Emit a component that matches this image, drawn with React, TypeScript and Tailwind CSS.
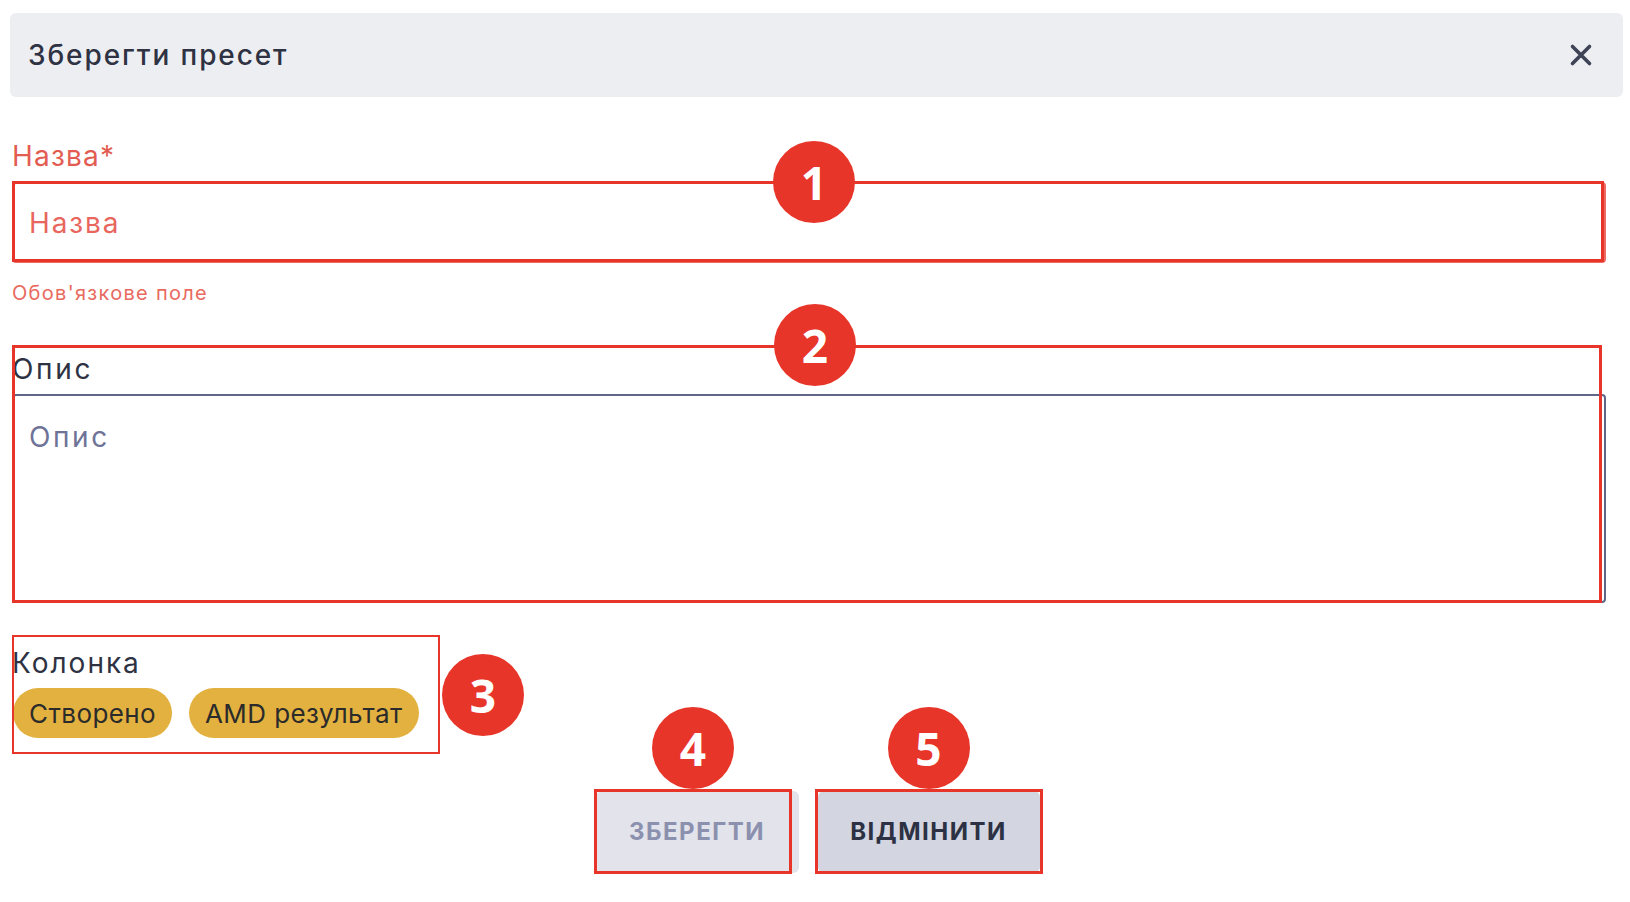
import React from "react";

const font = { fontFamily: "Inter, 'Noto Sans', sans-serif" };

// Red numbered callout disc; placement comes from the caller.
function Marker({ n, className }: { n: number; className: string }) {
  return (
    <div
      className={`pointer-events-none absolute z-10 flex h-[82px] w-[82px] items-center justify-center rounded-full bg-[#E8352A] text-[46px] font-bold leading-none text-white ${className}`}
      style={{ fontFamily: "'Open Sans', 'Noto Sans', sans-serif" }}
    >
      {n}
    </div>
  );
}

// Red outline drawn over a highlighted region.
function Frame({ className }: { className: string }) {
  return <div className={`pointer-events-none absolute border-[#E8352A] ${className}`} />;
}

export default function App() {
  return (
    <div className="h-[902px] w-[1630px] overflow-hidden bg-white pl-[10px] pr-[7px] pt-[13px]" style={font}>
      {/* dialog header */}
      <div className="flex h-[84px] items-center justify-between rounded-[6px] bg-[#EDEEF2] pl-[18px] pr-[30px]">
        <h1 className="text-[28px] font-medium tracking-[1.9px] text-[#2E3242]">Зберегти пресет</h1>
        <svg width="24" height="24" viewBox="0 0 24 24" className="text-[#3E4356]">
          <path d="M3.5 3.5 L20.5 20.5 M20.5 3.5 L3.5 20.5" stroke="currentColor" strokeWidth="3.6" strokeLinecap="round" />
        </svg>
      </div>

      <div className="ml-[2px] mr-[17px] flex flex-col">
        {/* name field */}
        <label className="mt-[43px] block text-[28px] leading-[32px] tracking-[1.2px] text-[#E35C52]">Назва*</label>
        <div className="relative mt-[10px]">
          <div className="flex h-[81px] items-center rounded-[4px] border-2 border-[#EE6A64] pl-[15px]">
            <span className="text-[28px] tracking-[1.9px] text-[#E8665D]">Назва</span>
          </div>
          <Frame className="-top-px bottom-px left-0 right-[2px] border-[3px]" />
          <Marker n={1} className="left-1/2 top-0 ml-[5px] -translate-x-1/2 -translate-y-1/2" />
        </div>
        <p className="mt-[18px] text-[20px] leading-[24px] tracking-[1.3px] text-[#E86A60]">Обов'язкове поле</p>

        {/* description */}
        <div className="relative mt-[40px] pt-[8px]">
          <label className="block text-[28px] leading-[32px] tracking-[2.7px] text-[#2E3242]">Опис</label>
          <div className="mt-[9px] h-[209px] rounded-[4px] border-2 border-[#5F6687] pl-[15px] pt-[20px]">
            <span className="text-[28px] tracking-[2.6px] text-[#6E7397]">Опис</span>
          </div>
          <Frame className="bottom-0 left-0 right-[4px] top-0 border-[3px]" />
          <Marker n={2} className="left-1/2 top-0 ml-[6px] -translate-x-1/2 -translate-y-1/2" />
        </div>

        {/* column chips */}
        <div className="relative mt-[32px] w-[428px] pb-[16px] pt-[12px]">
          <label className="block text-[28px] leading-[32px] tracking-[2px] text-[#2E3242]">Колонка</label>
          <div className="mt-[9px] flex gap-[17px] pl-[1px]">
            <span className="flex h-[50px] items-center rounded-full bg-[#E3B13F] px-[16px] text-[26px] tracking-[0.4px] text-[#2B2B2B]">
              Створено
            </span>
            <span className="flex h-[50px] items-center rounded-full bg-[#E3B13F] px-[16px] text-[26px] tracking-[0.4px] text-[#2B2B2B]">
              AMD результат
            </span>
          </div>
          <Frame className="inset-0 border-[2px]" />
          <Marker n={3} className="left-full top-1/2 ml-[2px] -translate-y-1/2" />
        </div>
      </div>

      {/* actions */}
      <div className="mt-[37px] flex justify-center gap-[19px] pl-[2px]">
        <div className="relative">
          <button className="h-[82px] w-[203px] rounded-[6px] bg-[#E2E3EB] text-[24px] font-bold uppercase tracking-[1.5px] text-[#8A90AD]">
            Зберегти
          </button>
          <Frame className="-bottom-px -left-[2px] -top-[2px] right-[7px] border-[3px]" />
          <Marker n={4} className="bottom-full left-1/2 mb-[2px] -ml-[4px] -translate-x-1/2" />
        </div>
        <div className="relative">
          <button className="h-[82px] w-[222px] rounded-[6px] bg-[#D3D5E0] text-[24px] font-bold uppercase tracking-[1.5px] text-[#2C3143]">
            Відмінити
          </button>
          <Frame className="-bottom-px -left-[3px] -right-[3px] -top-[2px] border-[3px]" />
          <Marker n={5} className="bottom-full left-1/2 mb-[2px] -translate-x-1/2" />
        </div>
      </div>
    </div>
  );
}
